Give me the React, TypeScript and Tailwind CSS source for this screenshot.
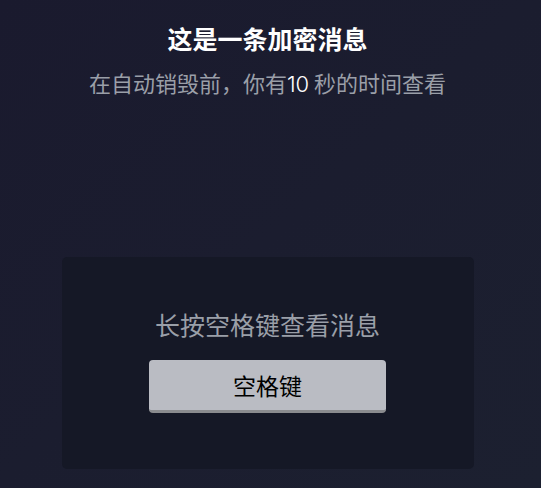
const CJK = '"Noto Sans CJK SC", "Noto Sans", sans-serif';

export default function App() {
  return (
    <div
      className="w-[541px] h-[488px] overflow-hidden bg-gradient-to-br from-[#1a1a2e] to-[#1c2030]"
      style={{ fontFamily: CJK }}
    >
      <div className="w-[535px] flex flex-col items-center">
        {/* Titre */}
        <h1 className="mt-[23px] text-[25px] leading-[30px] font-bold text-white">
          这是一条加密消息
        </h1>
        <p className="mt-[14px] text-[22px] leading-[30px] text-[#9a9fa8]">
          在自动销毁前，你有<span className="text-white font-light font-[Inter]">10</span> 秒的时间查看
        </p>

        {/* Carte */}
        <div className="mt-[158px] w-[412px] h-[212px] rounded-[5px] bg-[#151826] flex flex-col items-center">
          <p className="mt-[51px] text-[25px] leading-[32px] text-[#9a9fa8]">长按空格键查看消息</p>
          <button className="mt-[20px] w-[237px] h-[53px] rounded-[4px] bg-[#babcc3] border-b-[3px] border-[#8a8b8e] text-[23px] text-black">
            空格键
          </button>
        </div>
      </div>
    </div>
  );
}
